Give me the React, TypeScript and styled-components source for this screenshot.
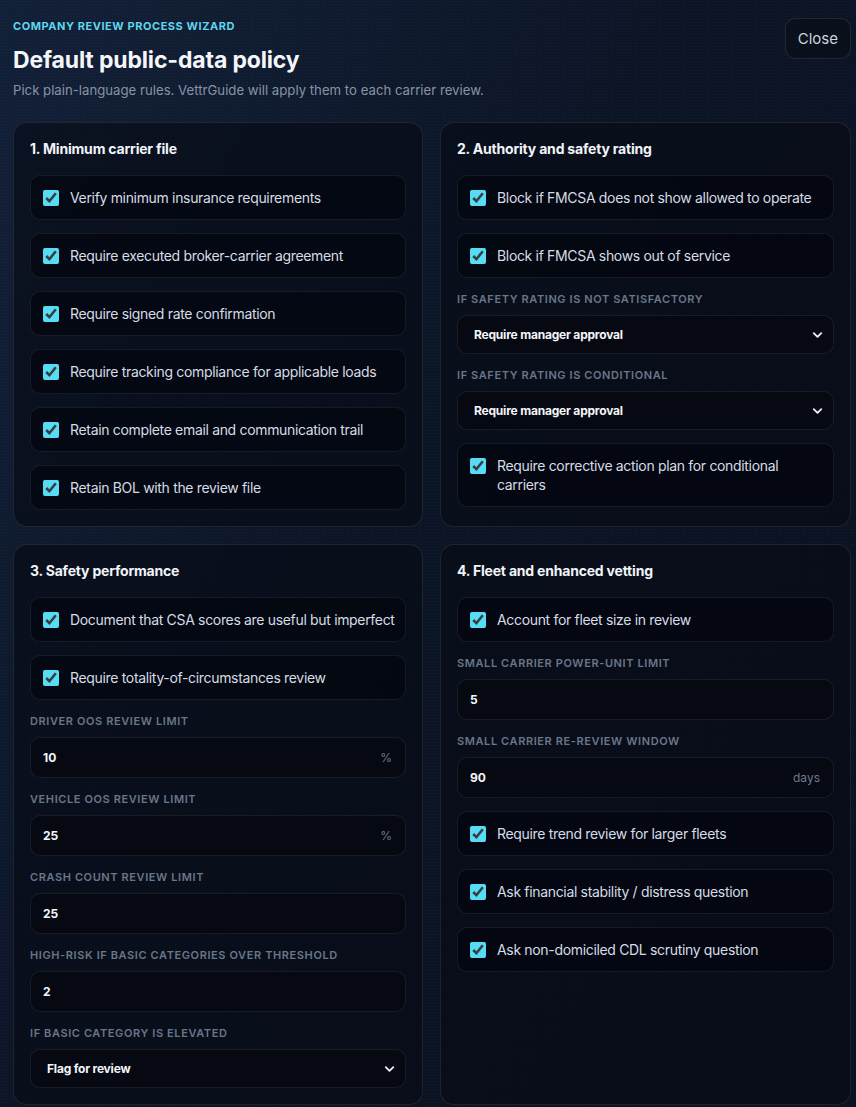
import React from "react";
import styled, { createGlobalStyle } from "styled-components";
import { ChevronDown } from "lucide-react";

const GlobalStyle = createGlobalStyle`
  html, body {
    margin: 0;
    padding: 0;
    background: #0d1626;
  }
  body {
    font-family: Inter, "Noto Sans", sans-serif;
    color: #e6ebf2;
    -webkit-font-smoothing: antialiased;
  }
  * { box-sizing: border-box; }
`;

const Page = styled.div`
  min-height: 1107px;
  padding: 19px 5px 2px 13px;
  background-color: #0d1626;
  background-image:
    radial-gradient(rgba(255, 255, 255, 0.035) 1px, transparent 1px),
    linear-gradient(120deg, #122038 0%, #0c1526 45%, #0a1120 100%);
  background-size: 3px 3px, 100% 100%;
`;

const Header = styled.header`
  display: flex;
  justify-content: space-between;
  align-items: flex-start;
  margin-bottom: 23px;
`;

const HeaderText = styled.div`
  display: flex;
  flex-direction: column;
`;

const Eyebrow = styled.div`
  font-size: 11px;
  font-weight: 700;
  letter-spacing: 0.55px;
  line-height: 14px;
  color: #5fd6ec;
  text-transform: uppercase;
`;

const Title = styled.h1`
  margin: 12px 0 0;
  font-size: 23px;
  line-height: 30px;
  font-weight: 700;
  color: #f4f6fa;
  letter-spacing: -0.15px;
`;

const Subtitle = styled.p`
  margin: 6px 0 0;
  font-size: 13.2px;
  line-height: 18px;
  color: #8793a6;
`;

const CloseButton = styled.button`
  margin-top: -1px;
  height: 41px;
  padding: 0 12px;
  border-radius: 10px;
  border: 1px solid rgba(255, 255, 255, 0.1);
  background: rgba(8, 12, 22, 0.55);
  color: #cdd4de;
  font-family: inherit;
  font-size: 15px;
`;

const Grid = styled.div`
  display: grid;
  grid-template-columns: 410px 411px;
  column-gap: 17px;
  row-gap: 17px;
`;

const Card = styled.section`
  display: flex;
  flex-direction: column;
  gap: 13px;
  padding: 16px;
  border-radius: 14px;
  border: 1px solid rgba(255, 255, 255, 0.09);
  background: rgba(6, 9, 19, 0.62);
`;

const CardTitle = styled.h2`
  margin: 0 0 3px;
  font-size: 14px;
  line-height: 20px;
  font-weight: 700;
  color: #f1f4f8;
  letter-spacing: -0.2px;
`;

const CheckRow = styled.label`
  display: flex;
  align-items: flex-start;
  gap: 11px;
  padding: 12px 8px 12px 12px;
  border-radius: 10px;
  border: 1px solid rgba(255, 255, 255, 0.08);
  background: rgba(3, 6, 14, 0.7);
  font-size: 14px;
  line-height: 19px;
  letter-spacing: -0.33px;
  color: #d6dce5;
`;

const Check = styled.input.attrs({ type: "checkbox" })`
  flex: none;
  width: 16px;
  height: 16px;
  margin: 1.5px 0 0;
  accent-color: #56dcf4;
`;

const Field = styled.div`
  display: flex;
  flex-direction: column;
  gap: 8px;
`;

const FieldLabel = styled.div`
  font-size: 11px;
  line-height: 16px;
  font-weight: 600;
  letter-spacing: 0.6px;
  text-transform: uppercase;
  color: #6a7689;
`;

const InputBox = styled.div`
  display: flex;
  align-items: center;
  height: 41px;
  padding: 0 13px 0 12px;
  border-radius: 10px;
  border: 1px solid rgba(255, 255, 255, 0.08);
  background: #060912;
`;

const NumberInput = styled.input`
  flex: 1;
  min-width: 0;
  border: 0;
  outline: none;
  background: transparent;
  color: #f4f6fa;
  font-family: inherit;
  font-size: 12px;
  font-weight: 700;
  padding: 0;
`;

const Suffix = styled.span`
  font-size: 12px;
  color: #6d798b;
`;

const SelectWrap = styled.div`
  position: relative;
`;

const Select = styled.select`
  appearance: none;
  width: 100%;
  height: 39px;
  padding: 0 30px 0 16px;
  border-radius: 10px;
  border: 1px solid rgba(255, 255, 255, 0.08);
  background: #060912;
  color: #f4f6fa;
  font-family: inherit;
  font-size: 12px;
  font-weight: 700;
  letter-spacing: -0.2px;
  outline: none;
`;

const Chevron = styled(ChevronDown)`
  position: absolute;
  right: 9px;
  top: 50%;
  transform: translateY(-50%);
  pointer-events: none;
  color: #e8ecf2;
`;

const CheckItem: React.FC<{ text: string }> = ({ text }) => (
  <CheckRow>
    <Check defaultChecked />
    <span>{text}</span>
  </CheckRow>
);

const NumberField: React.FC<{ label: string; value: string; suffix?: string }> = ({
  label,
  value,
  suffix,
}) => (
  <Field>
    <FieldLabel>{label}</FieldLabel>
    <InputBox>
      <NumberInput defaultValue={value} />
      {suffix && <Suffix>{suffix}</Suffix>}
    </InputBox>
  </Field>
);

const SelectField: React.FC<{ label: string; value: string }> = ({ label, value }) => (
  <Field>
    <FieldLabel>{label}</FieldLabel>
    <SelectWrap>
      <Select defaultValue={value}>
        <option>{value}</option>
      </Select>
      <Chevron size={15} strokeWidth={3} />
    </SelectWrap>
  </Field>
);

export default function App() {
  return (
    <>
      <GlobalStyle />
      <Page>
        <Header>
          <HeaderText>
            <Eyebrow>Company review process wizard</Eyebrow>
            <Title>Default public-data policy</Title>
            <Subtitle>
              Pick plain-language rules. VettrGuide will apply them to each carrier review.
            </Subtitle>
          </HeaderText>
          <CloseButton>Close</CloseButton>
        </Header>

        <Grid>
          <Card>
            <CardTitle>1. Minimum carrier file</CardTitle>
            <CheckItem text="Verify minimum insurance requirements" />
            <CheckItem text="Require executed broker-carrier agreement" />
            <CheckItem text="Require signed rate confirmation" />
            <CheckItem text="Require tracking compliance for applicable loads" />
            <CheckItem text="Retain complete email and communication trail" />
            <CheckItem text="Retain BOL with the review file" />
          </Card>

          <Card>
            <CardTitle>2. Authority and safety rating</CardTitle>
            <CheckItem text="Block if FMCSA does not show allowed to operate" />
            <CheckItem text="Block if FMCSA shows out of service" />
            <SelectField label="If safety rating is not satisfactory" value="Require manager approval" />
            <SelectField label="If safety rating is conditional" value="Require manager approval" />
            <CheckItem text="Require corrective action plan for conditional carriers" />
          </Card>

          <Card>
            <CardTitle>3. Safety performance</CardTitle>
            <CheckItem text="Document that CSA scores are useful but imperfect" />
            <CheckItem text="Require totality-of-circumstances review" />
            <NumberField label="Driver OOS review limit" value="10" suffix="%" />
            <NumberField label="Vehicle OOS review limit" value="25" suffix="%" />
            <NumberField label="Crash count review limit" value="25" />
            <NumberField label="High-risk if BASIC categories over threshold" value="2" />
            <SelectField label="If BASIC category is elevated" value="Flag for review" />
          </Card>

          <Card>
            <CardTitle>4. Fleet and enhanced vetting</CardTitle>
            <CheckItem text="Account for fleet size in review" />
            <NumberField label="Small carrier power-unit limit" value="5" />
            <NumberField label="Small carrier re-review window" value="90" suffix="days" />
            <CheckItem text="Require trend review for larger fleets" />
            <CheckItem text="Ask financial stability / distress question" />
            <CheckItem text="Ask non-domiciled CDL scrutiny question" />
          </Card>
        </Grid>
      </Page>
    </>
  );
}
